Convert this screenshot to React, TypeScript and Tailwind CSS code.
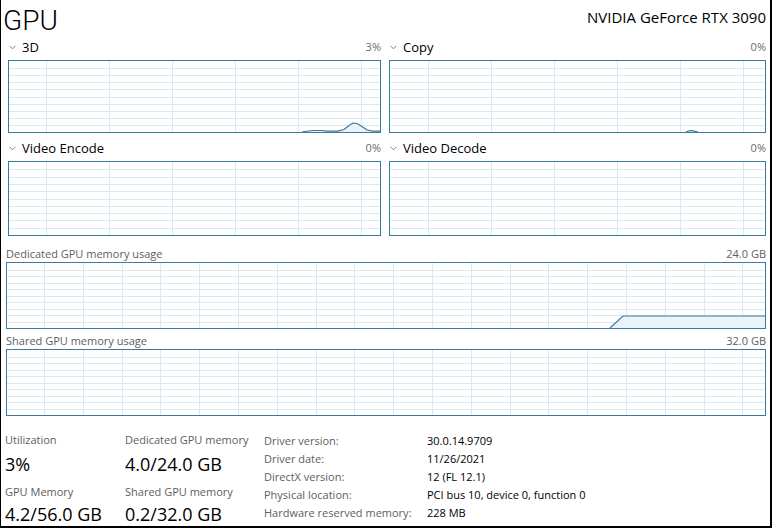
import React from "react";

type Pt = [number, number];

const BORDER = "#3a7b9c";
const GRID = "#d9e9f2";
const FILL = "#e9f3f9";

function Graph({
  w,
  h,
  colStep,
  colOffset,
  rows,
  points,
}: {
  w: number;
  h: number;
  colStep: number;
  colOffset: number;
  rows: number;
  points?: Pt[];
}) {
  const iw = w - 2;
  const ih = h - 2;
  const cols: number[] = [];
  for (let x = colOffset; x < iw; x += colStep) cols.push(Math.round(x) + 0.5);
  const hs: number[] = [];
  for (let i = 1; i < rows; i++) hs.push(Math.round((ih / rows) * i) + 0.5);

  let line = "";
  let area = "";
  if (points && points.length) {
    line = points.map((p, i) => `${i ? "L" : "M"}${p[0]} ${p[1]}`).join(" ");
    area = `${line} L${points[points.length - 1][0]} ${ih} L${points[0][0]} ${ih} Z`;
  }

  return (
    <div className="border border-[#3a7b9c] bg-white shrink-0" style={{ width: w, height: h }}>
      <svg width={iw} height={ih} viewBox={`0 0 ${iw} ${ih}`} className="block">
        {hs.map((y) => (
          <line key={"h" + y} x1={0} x2={iw} y1={y} y2={y} stroke={GRID} strokeWidth={1} />
        ))}
        {cols.map((x) => (
          <line key={"v" + x} x1={x} x2={x} y1={0} y2={ih} stroke={GRID} strokeWidth={1} />
        ))}
        {area && <path d={area} fill={FILL} />}
        {line && <path d={line} fill="none" stroke={BORDER} strokeWidth={1.2} />}
      </svg>
    </div>
  );
}

function Chevron() {
  return (
    <svg width="7" height="5" viewBox="0 0 7 5" className="shrink-0">
      <path d="M0.5 0.8 L3.5 3.8 L6.5 0.8" fill="none" stroke="#808080" strokeWidth="1" />
    </svg>
  );
}

function ChartHead({ name, pct, h }: { name: string; pct: string; h: string }) {
  return (
    <div className={`flex items-center justify-between ${h}`}>
      <div className="flex items-center gap-[6px] pl-[1px]">
        <Chevron />
        <span className="text-[13px] text-black leading-[16px]">{name}</span>
      </div>
      <span className="text-[11px] text-[#6b6b6b] leading-[14px]">{pct}</span>
    </div>
  );
}

const threeD: Pt[] = [
  [293, 71], [299, 70], [304, 69.5], [313, 69.5], [318, 70.2], [329, 70.2],
  [335, 68.5], [340, 64.5], [344, 62], [348, 62.5], [353, 65.5], [358, 69],
  [364, 70.2], [371, 70.2],
];
const copy: Pt[] = [[296, 71], [299, 69.8], [302, 69.5], [305, 70.4], [308, 71]];
const dedicated: Pt[] = [[603, 65], [616, 53], [758, 53]];

export default function App() {
  return (
    <div
      className="w-[772px] h-[528px] bg-white border-l border-r-2 border-b-2 border-black flex flex-col"
      style={{ fontFamily: '"Segoe UI", "Open Sans", "Noto Sans", sans-serif' }}
    >
      {/* Title */}
      <div className="flex justify-between items-start h-[36px] pl-[2px] pr-[4px]">
        <span
          className="text-[28px] font-light leading-normal text-black"
          style={{ fontFamily: 'Roboto, "Open Sans", sans-serif' }}
        >
          GPU
        </span>
        <span className="text-[15px] leading-[20px] mt-[7px] text-black">NVIDIA GeForce RTX 3090</span>
      </div>

      {/* Engine charts */}
      <div className="flex gap-[8px] pl-[7px]">
        <div className="flex flex-col w-[373px]">
          <ChartHead name="3D" pct="3%" h="h-[24px] pb-[2px]" />
          <Graph w={373} h={73} colStep={63} colOffset={37} rows={10} points={threeD} />
          <ChartHead name="Video Encode" pct="0%" h="h-[28px] pt-[2px]" />
          <Graph w={373} h={75} colStep={63} colOffset={37} rows={10} />
        </div>
        <div className="flex flex-col w-[377px]">
          <ChartHead name="Copy" pct="0%" h="h-[24px] pb-[2px]" />
          <Graph w={377} h={73} colStep={63} colOffset={38} rows={10} points={copy} />
          <ChartHead name="Video Decode" pct="0%" h="h-[28px] pt-[2px]" />
          <Graph w={377} h={75} colStep={63} colOffset={38} rows={10} />
        </div>
      </div>

      {/* Memory charts */}
      <div className="flex flex-col pl-[5px] w-[765px]">
        <div className="flex items-end justify-between h-[26px] pb-[1px] text-[11px] leading-[14px] text-[#5e5e5e]">
          <span>Dedicated GPU memory usage</span>
          <span>24.0 GB</span>
        </div>
        <Graph w={760} h={67} colStep={38.8} colOffset={37} rows={10} points={dedicated} />
        <div className="flex items-end justify-between h-[20px] pb-[1px] text-[11px] leading-[14px] text-[#5e5e5e]">
          <span>Shared GPU memory usage</span>
          <span>32.0 GB</span>
        </div>
        <Graph w={760} h={67} colStep={38.8} colOffset={37} rows={10} />
      </div>

      {/* Stats */}
      <div className="flex pt-[16px] pl-[4px]">
        <div className="flex flex-col w-[120px]">
          <span className="text-[11px] leading-[16px] text-[#5e5e5e]">Utilization</span>
          <span className="text-[18px] leading-[24px] mt-[4px] text-black">3%</span>
          <span className="text-[11px] leading-[16px] mt-[8px] text-[#5e5e5e]">GPU Memory</span>
          <span className="text-[18px] leading-[22px] mt-[3px] text-black">4.2/56.0 GB</span>
        </div>
        <div className="flex flex-col w-[139px]">
          <span className="text-[11px] leading-[16px] text-[#5e5e5e]">Dedicated GPU memory</span>
          <span className="text-[18px] leading-[24px] mt-[4px] text-black">4.0/24.0 GB</span>
          <span className="text-[11px] leading-[16px] mt-[8px] text-[#5e5e5e]">Shared GPU memory</span>
          <span className="text-[18px] leading-[22px] mt-[3px] text-black">0.2/32.0 GB</span>
        </div>
        <div className="grid grid-cols-[163px_auto] auto-rows-[18px] text-[11px] leading-[18px]">
          <span className="text-[#5e5e5e]">Driver version:</span>
          <span className="text-black">30.0.14.9709</span>
          <span className="text-[#5e5e5e]">Driver date:</span>
          <span className="text-black">11/26/2021</span>
          <span className="text-[#5e5e5e]">DirectX version:</span>
          <span className="text-black">12 (FL 12.1)</span>
          <span className="text-[#5e5e5e]">Physical location:</span>
          <span className="text-black">PCI bus 10, device 0, function 0</span>
          <span className="text-[#5e5e5e]">Hardware reserved memory:</span>
          <span className="text-black">228 MB</span>
        </div>
      </div>
    </div>
  );
}
